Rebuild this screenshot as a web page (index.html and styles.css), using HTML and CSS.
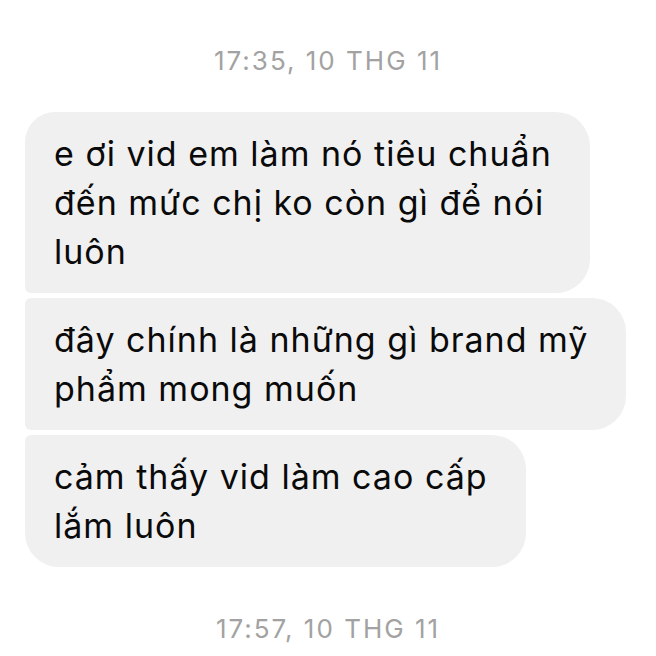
FILE: index.html
```html
<!DOCTYPE html>
<html lang="vi">
<head>
<meta charset="utf-8">
<title>Tin nhắn</title>
<link rel="stylesheet" href="styles.css">
</head>
<body>
<main class="chat">
  <div class="time time-top">17:35, 10 THG 11</div>
  <div class="group">
    <div class="bubble first">e ơi vid em làm nó tiêu chuẩn<br>đến mức chị ko còn gì để nói<br>luôn</div>
    <div class="bubble middle">đây chính là những gì brand mỹ<br>phẩm mong muốn</div>
    <div class="bubble last">cảm thấy vid làm cao cấp<br>lắm luôn</div>
  </div>
  <div class="time time-bottom">17:57, 10 THG 11</div>
</main>
</body>
</html>
```

FILE: styles.css
```css
html, body {
  margin: 0;
  padding: 0;
  background: #ffffff;
}

body {
  font-family: Inter, "Liberation Sans", Arial, sans-serif;
  color: #0a0a0a;
}

.chat {
  display: flex;
  flex-direction: column;
  padding: 0 25px;
}

.time {
  text-align: center;
  font-size: 26px;
  line-height: 30px;
  letter-spacing: 2px;
  color: #a2a2a2;
}

.time-top {
  margin-top: 46px;
}

.time-bottom {
  margin-top: 47px;
}

.group {
  display: flex;
  flex-direction: column;
  align-items: flex-start;
  gap: 5px;
  margin-top: 36px;
}

.bubble {
  background: #f0f0f0;
  font-size: 34px;
  line-height: 49px;
  letter-spacing: 1px;
  padding: 17px 38px 17px 29px;
  border-radius: 6px 34px 34px 6px;
}

.bubble.first {
  border-top-left-radius: 30px;
}

.bubble.last {
  border-bottom-left-radius: 34px;
}
```
